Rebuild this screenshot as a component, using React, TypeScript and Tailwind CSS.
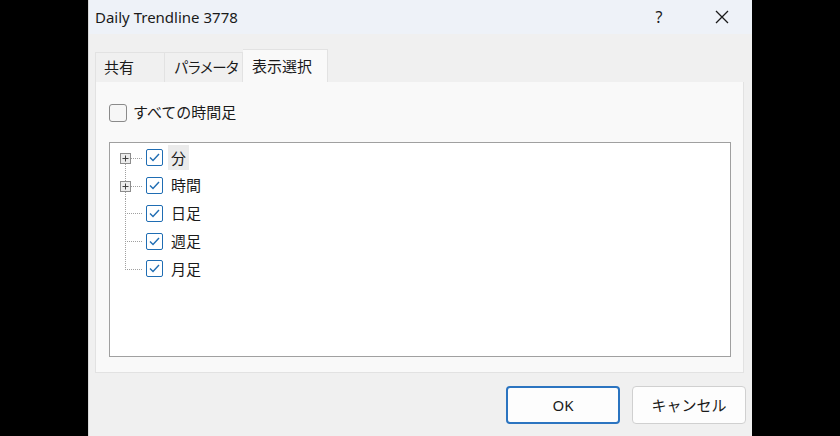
import React from 'react';

const font = { fontFamily: '"Noto Sans", "Noto Sans CJK JP", sans-serif' };

interface Item {
    label: string;
    expandable: boolean;
}

const items: Item[] = [
    { label: '分', expandable: true },
    { label: '時間', expandable: true },
    { label: '日足', expandable: false },
    { label: '週足', expandable: false },
    { label: '月足', expandable: false },
];

function Connector({ first, last, plus }: { first: boolean; last: boolean; plus: boolean }) {
    return (
        <svg width="36" height="28" viewBox="0 0 36 28" className="shrink-0">
            <line
                x1="15.5"
                y1={first ? 14 : 0}
                x2="15.5"
                y2={last ? 14 : 28}
                stroke="#a0a0a0"
                strokeDasharray="1 1"
            />
            <line x1="15" y1="14.5" x2="33" y2="14.5" stroke="#a0a0a0" strokeDasharray="1 1" />
            {plus && (
                <g>
                    <rect x="10.5" y="9.5" width="10" height="10" fill="#ececec" stroke="#8c8c8c" />
                    <line x1="12.5" y1="14.5" x2="18.5" y2="14.5" stroke="#404040" />
                    <line x1="15.5" y1="11.5" x2="15.5" y2="17.5" stroke="#404040" />
                </g>
            )}
        </svg>
    );
}

function CheckBox() {
    return (
        <div className="w-[17px] h-[17px] shrink-0 rounded-[2px] border border-[#1f6db3] bg-white flex items-center justify-center">
            <svg width="11" height="9" viewBox="0 0 11 9">
                <path d="M1 4.5 L4 7.5 L10 1" fill="none" stroke="#1f6db3" strokeWidth="1.4" />
            </svg>
        </div>
    );
}

export default function App() {
    return (
        <div className="w-[840px] h-[436px] bg-black flex" style={font}>
            <div className="ml-[88px] w-[664px] h-full bg-[#f0f0f0] flex flex-col border-l border-[#d8d8d8]">
                {/* Title bar */}
                <div className="h-[34px] bg-[#eef2f8] flex items-center pl-[6px] text-[15px] text-[#1a1a1a]">
                    <span className="flex-1">Daily Trendline 3778</span>
                    <span className="w-[20px] text-center text-[16px] mr-[46px]">?</span>
                    <svg width="14" height="14" viewBox="0 0 14 14" className="mr-[23px]">
                        <path d="M1 1 L13 13 M13 1 L1 13" stroke="#1a1a1a" strokeWidth="1.3" />
                    </svg>
                </div>

                {/* Tabs */}
                <div className="pt-[15px] pl-[6px] flex items-end text-[15px] text-[#1a1a1a] whitespace-nowrap">
                    <div className="h-[30px] w-[70px] flex items-center pl-[8px] bg-[#f0f0f0] border border-b-0 border-[#e2e2e2]">共有</div>
                    <div className="h-[30px] w-[78px] flex items-center pl-[9px] overflow-hidden bg-[#f0f0f0] border border-l-0 border-b-0 border-[#e2e2e2] text-[14.5px] tracking-[-1.6px]">パラメータ</div>
                    <div className="h-[33px] w-[85px] flex items-center pl-[9px] bg-[#f9f9f9] border border-l-0 border-b-0 border-[#e2e2e2]">表示選択</div>
                </div>

                {/* Tab panel */}
                <div className="ml-[6px] mr-[8px] h-[291px] bg-[#f9f9f9] border border-t-0 border-[#e2e2e2] pl-[13px] pr-[12px] pt-[21px]">
                    <div className="flex items-center h-[19px]">
                        <div className="w-[18px] h-[18px] rounded-[3px] border border-[#8a8a8a] bg-[#f6f6f6]" />
                        <span className="ml-[6px] text-[15px] text-[#1a1a1a]">すべての時間足</span>
                    </div>

                    <div className="mt-[20px] h-[215px] bg-white border border-[#a0a0a0] pt-[1px]">
                        {items.map((item, i) => (
                            <div key={item.label} className="flex items-center h-[27.75px]">
                                <Connector first={i === 0} last={i === items.length - 1} plus={item.expandable} />
                                <CheckBox />
                                <span
                                    className={
                                        'ml-[5px] px-[3px] h-[25px] flex items-center text-[15px] text-[#1a1a1a] ' +
                                        (i === 0 ? 'bg-[#ebebeb]' : '')
                                    }
                                >
                                    {item.label}
                                </span>
                            </div>
                        ))}
                    </div>
                </div>

                {/* Footer buttons */}
                <div className="flex justify-end gap-[12px] pt-[13px] pr-[6px] text-[15px] text-[#1a1a1a]">
                    <button className="w-[114px] h-[38px] rounded-[4px] bg-[#fdfdfd] border-2 border-[#2b74c0]">OK</button>
                    <button className="w-[114px] h-[38px] rounded-[4px] bg-[#fdfdfd] border border-[#d0d0d0]">キャンセル</button>
                </div>
            </div>
        </div>
    );
}
